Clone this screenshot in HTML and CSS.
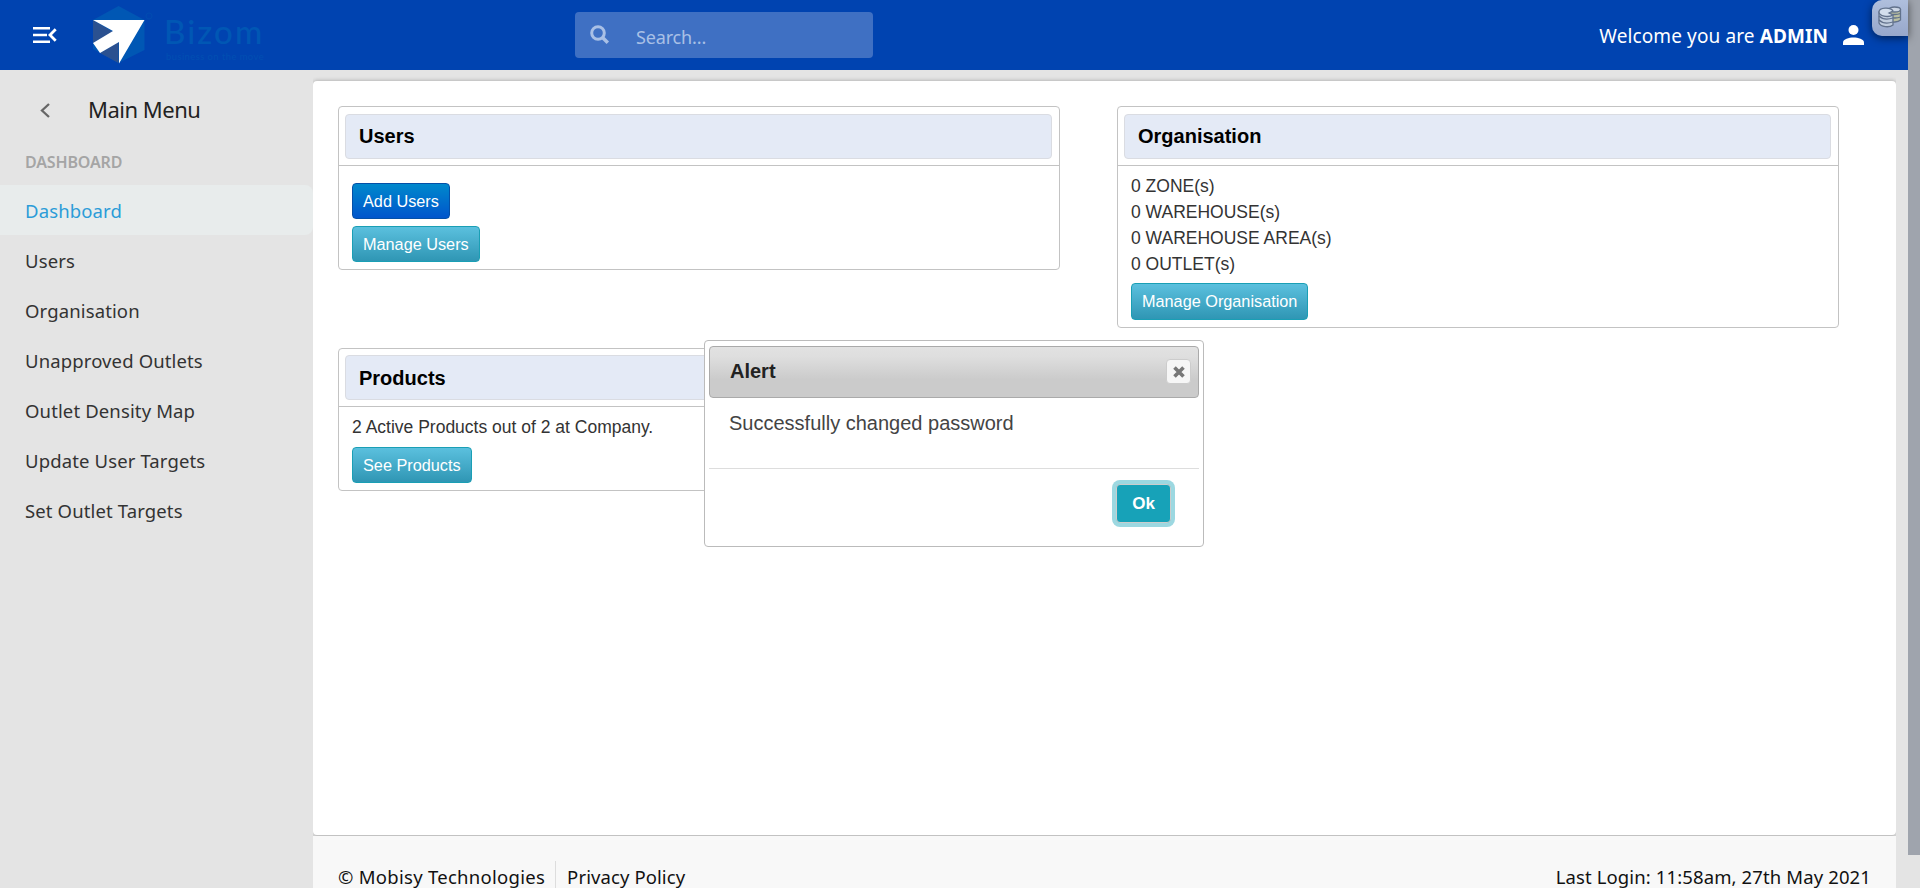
FILE: index.html
```html
<!DOCTYPE html>
<html lang="en">
<head>
<meta charset="utf-8">
<title>Bizom Dashboard</title>
<link rel="stylesheet" href="styles.css">
</head>
<body>
<div class="app">
  <header class="topbar">
    <svg class="toggle" width="24" height="16" viewBox="0 0 24 16"><path d="M0 0h17v2.6H0zM0 6.7h14v2.6H0zM0 13.4h17V16H0z" fill="#fff"/><path d="M22.700 2.300 17 8l5.700 5.700" fill="none" stroke="#fff" stroke-width="2.800"/></svg>
    <div class="brand">
      <svg width="62" height="60" viewBox="0 0 62 60"><path d="M25.500 1 51.500 15v30L25.500 58 0 44V15z" fill="#0057b4"/><path d="M0 15 20 27 0 38zM7 48 25.500 37V58z" fill="#2b5190"/><path d="M0 15H51.500L26 58.500V37L7 48 0 38 20 26z" fill="#fff"/><circle cx="56" cy="11" r="3" fill="none" stroke="#004eb0" stroke-width=".8"/></svg>
      <div class="brand-text"><span class="brand-name">Bizom</span><span class="brand-tag">business on the move</span></div>
    </div>
    <div class="search">
      <svg width="20" height="20" viewBox="0 0 20 20" fill="none" stroke="#a9c0e6"><circle cx="8" cy="8" r="6.300" stroke-width="3"/><path d="m12.500 12.500 5.300 5.300" stroke-width="3.500"/></svg>
      <span>Search...</span>
    </div>
    <div class="welcome"><span class="hello">Welcome you are <b>ADMIN</b></span>
      <svg width="21" height="20" viewBox="0 0 21 20" fill="#fff"><circle cx="10.500" cy="5" r="5"/><path d="M0 20v-2.500C0 14.200 6 12.500 10.500 12.500S21 14.200 21 17.500V20z"/></svg>
    </div>
    <div class="debug-tab">
      <svg width="24" height="22" viewBox="0 0 24 22" stroke="#62728c" stroke-width="1.300"><path d="M11 4v11c3 2 9 1 11.500-1V4z" fill="#b9bea0"/><path d="M11 7.500q6 2 11.500 0M11 11q6 2 11.500 0" fill="none"/><ellipse cx="16.500" cy="3.500" rx="6" ry="2.500" fill="#ccd6e5"/><path d="M1 6v11c2 4 10 5 14 2V9z" fill="#c2cedf"/><path d="M1 10q5 5 14 2M1 14q5 5 14 2" fill="none"/><path d="M1 6c0-5 12-5 14-1l-4 2 4 2C10 12 1 10 1 6z" fill="#d3deed"/></svg>
    </div>
  </header>

  <div class="body">
    <nav class="sidebar">
      <div class="menu-head"><svg width="10" height="15" viewBox="0 0 10 15"><path d="M9 1 2 7.500 9 14" fill="none" stroke="#666" stroke-width="2.300"/></svg><span>Main Menu</span></div>
      <div class="section">DASHBOARD</div>
      <a class="item active">Dashboard</a>
      <a class="item">Users</a>
      <a class="item">Organisation</a>
      <a class="item">Unapproved Outlets</a>
      <a class="item">Outlet Density Map</a>
      <a class="item">Update User Targets</a>
      <a class="item">Set Outlet Targets</a>
    </nav>
    <div class="content">
      <main class="panel">
        <section class="card">
          <div class="card-head"><h2>Users</h2></div>
          <div class="card-body roomy"><button class="btn primary">Add Users</button><button class="btn">Manage Users</button></div>
        </section>
        <section class="card">
          <div class="card-head"><h2>Organisation</h2></div>
          <div class="card-body"><p>0 ZONE(s)<br>0 WAREHOUSE(s)<br>0 WAREHOUSE AREA(s)<br>0 OUTLET(s)</p><button class="btn org">Manage Organisation</button></div>
        </section>
        <section class="card products">
          <div class="card-head"><h2>Products</h2></div>
          <div class="card-body"><p>2 Active Products out of 2 at Company.</p><button class="btn">See Products</button></div>
        </section>
      </main>
      <footer class="footer"><span class="copy">© Mobisy Technologies</span><span class="policy">Privacy Policy</span><span class="login">Last Login: 11:58am, 27th May 2021</span></footer>
    </div>
  </div>

  <div class="dialog">
    <div class="dialog-title"><span>Alert</span><span class="close"><svg width="12" height="12" viewBox="0 0 12 12"><path d="m1.500 1.500 9 9m0-9-9 9" stroke="#777" stroke-width="3.600"/></svg></span></div>
    <div class="dialog-body">Successfully changed password</div>
    <div class="dialog-actions"><button class="ok">Ok</button></div>
  </div>
</div>
<div class="scrollbar"><div class="thumb"></div></div>
</body>
</html>
```
FILE: styles.css
```css
* { box-sizing: border-box; }
body { margin: 0; width: 1920px; height: 888px; overflow: hidden; display: flex; background: #e4e4e4; font-family: "Liberation Sans", Arial, sans-serif; color: #333; }
svg { display: block; flex: none; }
.app { position: relative; width: 1908px; height: 888px; display: flex; flex-direction: column; }
.topbar { height: 70px; flex: none; background: #0043b0; display: flex; align-items: center; font-family: "Noto Sans", sans-serif; position: relative; }
.toggle { margin-left: 33px; }
.brand { margin-left: 36px; width: 482px; display: flex; align-items: flex-start; padding-top: 5px; height: 70px; }
.brand-text { margin: 6px 0 0 9px; display: flex; flex-direction: column; color: #0057b4; font-family: Lato, sans-serif; }
.brand-name { font-size: 33px; line-height: 40px; letter-spacing: 2.1px; font-weight: 500; }
.brand-tag { font-size: 9.500px; line-height: 11px; color: #004fb2; letter-spacing: .4px; padding-left: 2px; white-space: nowrap; }
.search { width: 298px; height: 46px; border-radius: 4px; background: #3f70c3; display: flex; align-items: center; padding-left: 15px; font-size: 18px; color: #a9c0e6; }
.search span { margin: 3px 0 0 26px; letter-spacing: -.15px; }
.welcome { margin-left: auto; margin-right: 44px; display: flex; align-items: center; color: #fff; font-size: 19px; gap: 15px; }
.hello { letter-spacing: .11px; white-space: nowrap; padding-top: 1px; }
.debug-tab { position: absolute; right: 0; top: 0; width: 36px; height: 36px; border-radius: 10px 0 0 10px; background: linear-gradient(#afbfdd, #97a7cb); box-shadow: 0 2px 9px rgba(0,0,0,.55); padding: 6px 0 0 6px; }
.body { display: flex; flex: 1; min-height: 0; }
.sidebar { width: 313px; font-family: "Noto Sans", sans-serif; color: #333; }
.menu-head { height: 80px; display: flex; align-items: center; padding-left: 40px; gap: 38px; font-size: 22px; color: #222; letter-spacing: -.5px; }
.menu-head span { padding-bottom: 2px; }
.section { height: 35px; line-height: 25px; padding-left: 25px; font-size: 16px; font-weight: 600; color: #a5a5a5; letter-spacing: -.15px; }
.item { display: block; height: 50px; line-height: 51px; padding-left: 25px; font-size: 18.500px; letter-spacing: .13px; }
.active { background: #e8ecec; color: #2b9cd8; border-radius: 0 8px 8px 0; }
.content { width: 1583px; padding-top: 11px; display: flex; flex-direction: column; }
.panel { height: 754px; flex: none; background: #fff; border-radius: 4px; box-shadow: 0 0 4px rgba(0,0,0,.3); clip-path: inset(-6px 0 -1px); padding: 25px; display: grid; grid-template-columns: 722px 722px; column-gap: 57px; row-gap: 20px; align-content: start; align-items: start; }
.card { border: 1px solid #c3c3c3; border-radius: 4px; }
.card-head { height: 59px; padding: 7px 7px 0 6px; border-bottom: 1px solid #c3c3c3; }
.products .card-head { height: 58px; padding-top: 6px; }
.card h2 { margin: 0; height: 45px; line-height: 43px; background: #e4eaf6; border: 1px solid #dadce2; border-radius: 4px; padding-left: 13px; font-size: 20px; color: #000; }
.products h2 { line-height: 45px; }
.card-body { padding: 7px 13px; display: flex; flex-direction: column; align-items: flex-start; }
.roomy { padding-top: 17px; gap: 7px; }
.card p { margin: 0 0 6px; font-size: 17.500px; line-height: 26px; }
.products p { margin-bottom: 7px; }
.btn { height: 36px; padding: 0 10px; border: 1px solid #1a9fb5; border-radius: 4px; background: linear-gradient(#5bc0de, #2f96b4); color: #fff; font: 16.250px "Liberation Sans", Arial, sans-serif; white-space: nowrap; }
.primary { background: linear-gradient(#0088cc, #0055cc); border-color: #0450a8; }
.org { height: 37px; }
.footer { flex: 1; background: #f8f8f8; border-top: 1px solid #ddd; display: flex; align-items: flex-start; padding: 25px 25px 0; font: 18.500px/31px "Noto Sans", sans-serif; color: #111; }
.copy { height: 33px; padding-right: 10px; border-right: 1px solid #ddd; letter-spacing: .28px; }
.policy { padding-left: 11px; letter-spacing: .1px; }
.login { margin-left: auto; letter-spacing: .12px; }
.dialog { position: absolute; left: 704px; top: 340px; width: 500px; height: 207px; background: #fff; border: 1px solid #bbb; border-radius: 4px; padding: 5px 4px; }
.dialog-title { height: 52px; border: 1px solid #aaa; border-radius: 4px; background: linear-gradient(#e2e2e2, #dedede 20%, #cbcbcb 65%, #cbcbcb); display: flex; align-items: center; justify-content: space-between; padding: 0 7px 1px 20px; font-size: 20px; font-weight: bold; color: #222; }
.close { width: 25px; height: 25px; background: #f6f6f6; border: 1px solid #ccc; border-radius: 4px; display: grid; place-items: center; padding-left: 1px; }
.dialog-body { height: 70px; padding: 13px 20px; font-size: 20px; line-height: 24px; color: #444; }
.dialog-actions { border-top: 1px solid #ddd; padding: 15px 28px 0; display: flex; justify-content: flex-end; }
.ok { width: 55px; height: 39px; padding: 0; background: #17a2b8; border: 1px solid #ccc; border-radius: 4px; box-shadow: 0 0 0 4px #9cd8e1; color: #fff; font: bold 17px "Liberation Sans", Arial, sans-serif; }
.scrollbar { width: 12px; height: 888px; background: #e4e4e4; }
.thumb { height: 855px; background: #9fa4ad; }
```
